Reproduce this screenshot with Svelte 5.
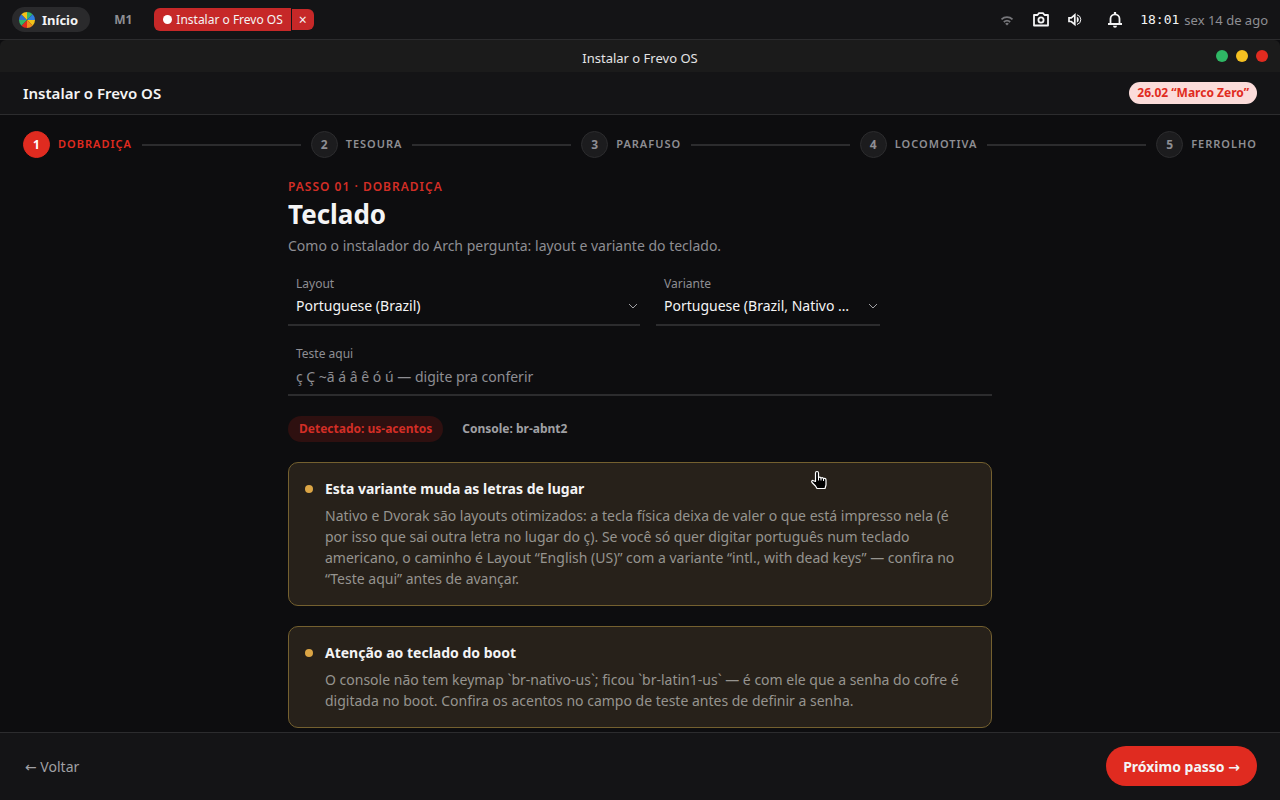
<script lang="ts">
	const steps = ['Dobradiça', 'Tesoura', 'Parafuso', 'Locomotiva', 'Ferrolho'];
	const wheel = ['#35b56a', '#2f7fe0', '#f2c21a', '#f28c1e', '#e02b20', '#35b56a', '#2f6fd0', '#f2c21a'];

	const notices = [
		{
			title: 'Esta variante muda as letras de lugar',
			text: 'Nativo e Dvorak são layouts otimizados: a tecla física deixa de valer o que está impresso nela (é por isso que sai outra letra no lugar do ç). Se você só quer digitar português num teclado americano, o caminho é Layout “English (US)” com a variante “intl., with dead keys” — confira no “Teste aqui” antes de avançar.'
		},
		{
			title: 'Atenção ao teclado do boot',
			text: 'O console não tem keymap `br-nativo-us`; ficou `br-latin1-us` — é com ele que a senha do cofre é digitada no boot. Confira os acentos no campo de teste antes de definir a senha.'
		}
	];

	let current = $state(0);
	let layout = $state('br');
	let variant = $state('nativo');
	let sample = $state('');

	function point(i: number) {
		const a = (i * Math.PI) / 4;
		return `${8 + 8 * Math.sin(a)} ${8 - 8 * Math.cos(a)}`;
	}

	function next() {
		if (current < steps.length - 1) current += 1;
	}

	function back() {
		if (current > 0) current -= 1;
	}
</script>

<div class="desktop">
	<header class="topbar">
		<button class="start">
			<svg width="16" height="16" viewBox="0 0 16 16" aria-hidden="true">
				{#each wheel as color, i}
					<path d="M8 8L{point(i)}A8 8 0 0 1 {point(i + 1)}Z" fill={color} />
				{/each}
			</svg>
			Início
		</button>
		<button class="workspace">M1</button>
		<div class="task">
			<button class="task-name"><span class="task-dot"></span>Instalar o Frevo OS</button>
			<button class="task-close" aria-label="Fechar">×</button>
		</div>

		<div class="tray">
			<button class="tray-btn" aria-label="Rede">
				<svg class="dim" width="16" height="16" viewBox="0 0 16 16" fill="none" stroke="currentColor" stroke-width="1.7">
					<path d="M2.5 7.4a8 8 0 0 1 11 0M4.8 10a4.8 4.8 0 0 1 6.4 0" />
					<path d="M6.2 11.7a2.6 2.6 0 0 1 3.6 0L8 13.6z" fill="currentColor" stroke="none" />
				</svg>
			</button>
			<button class="tray-btn" aria-label="Captura de tela">
				<svg width="18" height="18" viewBox="0 0 18 18" fill="none" stroke="currentColor" stroke-width="1.8">
					<path d="M2 4h3.5L7 2.2h4L12.5 4H16v10.500H2z" stroke-linejoin="round" />
					<circle cx="9" cy="9" r="2.6" />
				</svg>
			</button>
			<button class="tray-btn" aria-label="Volume">
				<svg width="16" height="16" viewBox="0 0 16 16" fill="none" stroke="currentColor" stroke-width="1.7">
					<path d="M2 5.8v3.7h2.3L7.8 12.5V2.8L4.3 5.8z" />
					<path d="M9.8 4.6v6.2a3.4 3.4 0 0 0 0-6.2z" fill="currentColor" stroke="none" />
					<path d="M10 2.800a5 5 0 0 1 0 9.700" stroke-width="1" />
				</svg>
			</button>
			<button class="tray-btn bell" aria-label="Notificações">
				<svg width="16" height="16" viewBox="0 0 16 16" fill="none" stroke="currentColor" stroke-width="1.8">
					<path d="M1 12h14M3.5 12V6.800a4.500 4.500 0 0 1 9 0V12" />
					<path d="M8 0v2.500" stroke-width="2.200" />
					<path d="M6 13.700h4a2 2 0 0 1-4 0z" fill="currentColor" stroke="none" />
				</svg>
			</button>
			<time class="clock">18:01</time>
			<span class="date">sex 14 de ago</span>
		</div>
	</header>

	<main class="window">
		<div class="titlebar">
			<span class="title">Instalar o Frevo OS</span>
			<div class="controls">
				<button class="control min" aria-label="Minimizar"></button>
				<button class="control max" aria-label="Maximizar"></button>
				<button class="control close" aria-label="Fechar janela"></button>
			</div>
		</div>

		<div class="app-header">
			<span class="app-name">Instalar o Frevo OS</span>
			<span class="version">26.02 “Marco Zero”</span>
		</div>

		<ol class="stepper">
			{#each steps as step, i}
				<li class="step" class:active={i === current}>
					<span class="step-number">{i + 1}</span>
					<span class="step-name">{step}</span>
				</li>
				{#if i < steps.length - 1}
					<li class="step-line" aria-hidden="true"></li>
				{/if}
			{/each}
		</ol>

		<div class="content">
			<section class="panel">
				<p class="eyebrow">Passo 0{current + 1} · {steps[current]}</p>
				<h1>Teclado</h1>
				<p class="lead">Como o instalador do Arch pergunta: layout e variante do teclado.</p>

				<div class="fields">
					<div class="field">
						<label for="layout">Layout</label>
						<select id="layout" bind:value={layout}>
							<option value="br">Portuguese (Brazil)</option>
							<option value="us">English (US)</option>
						</select>
						<svg class="chevron" width="10" height="10" viewBox="0 0 10 10" aria-hidden="true"><path d="M1 3l4 4 4-4" /></svg>
					</div>
					<div class="field">
						<label for="variant">Variante</label>
						<select id="variant" bind:value={variant}>
							<option value="nativo">Portuguese (Brazil, Nativo for US keyboards)</option>
							<option value="dvorak">Portuguese (Brazil, Dvorak)</option>
						</select>
						<svg class="chevron" width="10" height="10" viewBox="0 0 10 10" aria-hidden="true"><path d="M1 3l4 4 4-4" /></svg>
					</div>
				</div>

				<div class="field">
					<label for="sample">Teste aqui</label>
					<input id="sample" type="text" placeholder="ç Ç ~ã á â ê ó ú — digite pra conferir" bind:value={sample} />
				</div>

				<div class="chips">
					<span class="chip detected">Detectado: us-acentos</span>
					<span class="chip">Console: br-abnt2</span>
				</div>

				{#each notices as notice}
					<article class="notice">
						<span class="notice-dot"></span>
						<div>
							<h2>{notice.title}</h2>
							<p>{notice.text}</p>
						</div>
					</article>
				{/each}
			</section>
		</div>

		<footer class="actions">
			<button class="back" onclick={back}><span class="arrow">←</span> Voltar</button>
			<button class="next" onclick={next}>Próximo passo <span class="arrow">→</span></button>
		</footer>
	</main>

	<svg class="cursor" width="20" height="20" viewBox="0 0 20 20" aria-hidden="true">
		<path
			d="M6.5 11.5V3a1.500 1.500 0 0 1 3 0v4.500q1.500-1 2.500.5 1.500-.8 2.500.5 2.500-.5 2.500 1.500v5l-1 3.500H8l-1.500-2.500L3 12.500c-1-1.500.5-2.500 1.500-1.800z"
			fill="#000"
			stroke="#fff"
			stroke-width="1.2"
			stroke-linejoin="round"
		/>
		<path d="M9.500 7.500v3M12 8v2.500M14.500 8.500v2.500" stroke="#fff" />
	</svg>
</div>

<style>
	:global(body) {
		background: #0d0d0f;
	}

	.desktop {
		display: flex;
		flex-direction: column;
		height: 100vh;
		overflow: hidden;
		font-family: 'Noto Sans', sans-serif;
		font-size: 14px;
		color: #f4f4f5;
	}

	* {
		box-sizing: border-box;
	}

	button {
		border: none;
		padding: 0;
		background: none;
		color: inherit;
		font: inherit;
		cursor: pointer;
	}

	h1,
	h2,
	p,
	ol {
		margin: 0;
		padding: 0;
	}

	.topbar {
		display: flex;
		align-items: center;
		flex: none;
		height: 40px;
		padding: 0 12px;
		background: #141416;
		border-bottom: 1px solid #2c2c2e;
	}

	.start {
		display: flex;
		align-items: center;
		gap: 7px;
		height: 25px;
		padding: 0 12px 0 7px;
		border-radius: 13px;
		background: #2a2a2c;
		font-size: 13px;
		font-weight: 700;
	}

	.workspace {
		margin-left: 24px;
		color: #8e8e93;
		font-size: 12px;
		font-weight: 700;
	}

	.task {
		display: flex;
		align-items: center;
		gap: 1px;
		margin-left: 22px;
		font-size: 12px;
	}

	.task-name {
		display: flex;
		align-items: center;
		gap: 4px;
		height: 23px;
		padding: 0 8px 0 9px;
		border-radius: 6px 0 0 6px;
		background: #c62828;
	}

	.task-dot {
		width: 9px;
		height: 9px;
		border-radius: 50%;
		background: #fff;
	}

	.task-close {
		width: 22px;
		height: 21px;
		border-radius: 0 6px 6px 0;
		background: #c62828;
		font-size: 14px;
		line-height: 21px;
	}

	.tray {
		display: flex;
		align-items: center;
		margin-left: auto;
	}

	.tray-btn {
		display: flex;
		margin-right: 17px;
	}

	.tray-btn.bell {
		margin-left: 7px;
	}

	.dim {
		color: #77777b;
	}

	.clock {
		font-family: 'DejaVu Sans Mono', monospace;
		font-size: 13px;
	}

	.date {
		margin-left: 5px;
		color: #8e8e93;
		font-size: 13px;
	}

	.window {
		display: flex;
		flex-direction: column;
		flex: 1;
		min-height: 0;
	}

	.titlebar {
		display: grid;
		grid-template-columns: 1fr auto 1fr;
		align-items: center;
		flex: none;
		height: 32px;
		padding: 0 12px;
		border-radius: 6px 6px 0 0;
		background: #1b1b1b;
		font-size: 13px;
	}

	.title {
		grid-column: 2;
		padding-top: 4px;
		color: #e4e4e6;
	}

	.controls {
		display: flex;
		justify-content: flex-end;
		gap: 8px;
	}

	.control {
		width: 12px;
		height: 12px;
		border-radius: 50%;
	}

	.min { background: #2fb865; }
	.max { background: #f5c021; }
	.close { background: #e02b20; }

	.app-header {
		display: flex;
		align-items: center;
		justify-content: space-between;
		flex: none;
		height: 43px;
		padding: 0 23px;
		background: #141416;
		border-bottom: 1px solid #2c2c2e;
	}

	.app-name {
		font-size: 15px;
		font-weight: 600;
	}

	.version {
		padding: 0 8px;
		border-radius: 11px;
		background: #fbdcda;
		color: #e02b20;
		font-size: 12px;
		font-weight: 700;
		line-height: 22px;
	}

	.stepper {
		display: flex;
		align-items: center;
		flex: none;
		gap: 10px;
		padding: 16px 23px;
		list-style: none;
	}

	.step {
		display: flex;
		align-items: center;
		gap: 8px;
		color: #8e8e93;
	}

	.step-number {
		width: 27px;
		border: 1px solid #2c2c2e;
		border-radius: 50%;
		background: #1c1c1e;
		font-size: 12px;
		font-weight: 700;
		line-height: 25px;
		text-align: center;
	}

	.step-name {
		font-size: 11px;
		font-weight: 600;
		letter-spacing: 1px;
		line-height: 16px;
		padding-bottom: 2px;
		text-transform: uppercase;
	}

	.step.active {
		color: #e02b20;
	}

	.active .step-number {
		border-color: #e02b20;
		background: #e02b20;
		color: #fff;
	}

	.step-line {
		flex: 1;
		height: 2px;
		background: #2c2c2e;
	}

	.content {
		flex: 1;
		min-height: 0;
		overflow: hidden;
		padding: 3px 24px 0;
	}

	.panel {
		display: flex;
		flex-direction: column;
		max-width: 704px;
		margin: 0 auto;
	}

	.eyebrow {
		color: #d22e26;
		font-size: 12px;
		font-weight: 600;
		letter-spacing: 1px;
		line-height: 20px;
		text-transform: uppercase;
	}

	h1 {
		font-size: 26px;
		font-weight: 700;
		line-height: 34px;
	}

	.lead {
		margin-bottom: 11px;
		color: #8e8e93;
		line-height: 30px;
	}

	.fields {
		display: grid;
		grid-template-columns: 1fr 224px 96px;
		column-gap: 16px;
		margin-bottom: 16px;
	}

	.field {
		position: relative;
		height: 54px;
		border-bottom: 2px solid #2c2c2e;
	}

	label {
		display: block;
		padding: 3px 8px 0;
		color: #8e8e93;
		font-size: 12px;
		line-height: 18px;
	}

	select,
	input {
		display: block;
		width: 100%;
		height: 26px;
		margin: 0;
		padding: 0 30px 0 8px;
		border: none;
		outline: none;
		appearance: none;
		background: transparent;
		color: #f4f4f5;
		font: inherit;
		text-overflow: ellipsis;
	}

	select {
		height: 24px;
	}

	input::placeholder {
		color: #8e8e93;
		opacity: 1;
	}

	.chevron {
		position: absolute;
		right: 2px;
		top: 29px;
		fill: none;
		stroke: #a0a0a4;
		pointer-events: none;
	}

	.chips {
		display: flex;
		gap: 8px;
		margin: 20px 0;
	}

	.chip {
		padding: 0 11px;
		border-radius: 13px;
		color: #a0a0a4;
		font-size: 12px;
		font-weight: 700;
		line-height: 26px;
	}

	.detected {
		background: #2e1010;
		color: #d22e26;
	}

	.notice {
		display: flex;
		gap: 12px;
		margin-bottom: 20px;
		padding: 16px;
		border: 1px solid #74602f;
		border-radius: 10px;
		background: #27211a;
	}

	.notice-dot {
		flex: none;
		width: 8px;
		height: 8px;
		margin-top: 6px;
		border-radius: 50%;
		background: #dba545;
	}

	h2 {
		margin-bottom: 6px;
		font-size: 14px;
		font-weight: 700;
		line-height: 20px;
	}

	.notice p {
		color: #96948f;
		line-height: 21px;
	}

	.actions {
		display: flex;
		align-items: center;
		justify-content: space-between;
		flex: none;
		height: 68px;
		padding: 0 23px 1px 25px;
		background: #141416;
		border-top: 1px solid #2c2c2e;
	}

	.back {
		color: #a0a0a4;
	}

	.next {
		height: 40px;
		padding: 0 17px;
		border-radius: 20px;
		background: #e02b20;
		font-weight: 700;
	}

	.arrow {
		font-family: 'DejaVu Sans', sans-serif;
	}

	.cursor {
		position: absolute;
		left: 809px;
		top: 470px;
		pointer-events: none;
	}
</style>
